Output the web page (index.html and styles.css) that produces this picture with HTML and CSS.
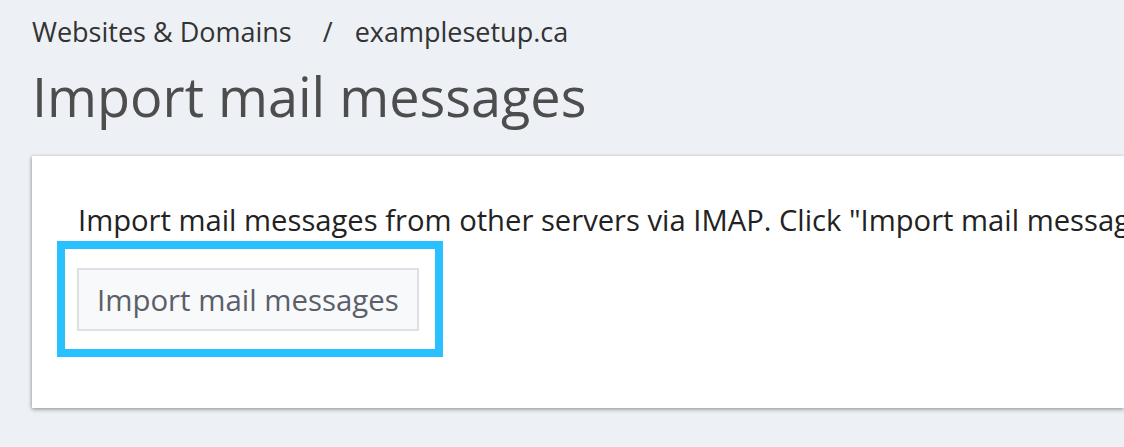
FILE: index.html
```html
<!DOCTYPE html>
<html lang="en">
<head>
<meta charset="utf-8">
<title>Import mail messages</title>
<link rel="stylesheet" href="styles.css">
</head>
<body>
<div class="page">
  <nav class="breadcrumbs">
    <a class="crumb">Websites &amp; Domains</a>
    <span class="sep">/</span>
    <a class="crumb">examplesetup.ca</a>
  </nav>
  <h1 class="title">Import mail messages</h1>
  <section class="card">
    <p class="hint">Import mail messages from other servers via IMAP. Click "Import mail messages" to start.</p>
    <div class="actions">
      <button class="btn" type="button">Import mail messages<span class="highlight"></span></button>
    </div>
  </section>
</div>
</body>
</html>
```

FILE: styles.css
```css
html, body {
  margin: 0;
  padding: 0;
  background: #edf0f5;
  overflow: hidden;
}

body {
  font-family: "Open Sans", "Noto Sans", sans-serif;
  width: 1124px;
  height: 447px;
}

.page {
  padding: 15px 0 0 32px;
}

.breadcrumbs {
  display: flex;
  align-items: baseline;
  font-size: 27px;
  line-height: 33px;
  color: #333;
  white-space: nowrap;
}

.crumb {
  color: #333;
}

.sep {
  margin: 0 22px 0 31px;
}

.title {
  margin: 12px 0 0 0;
  font-size: 54px;
  font-weight: 400;
  line-height: 72px;
  color: #4d4d4d;
  white-space: nowrap;
}

.card {
  margin-top: 24px;
  width: 1092px;
  height: 252px;
  background: #fff;
  box-shadow: 0 2px 4px rgba(0, 0, 0, 0.28), -1px 0 3px rgba(0, 0, 0, 0.15);
  padding: 44px 0 0 46px;
  box-sizing: border-box;
  overflow: hidden;
}

.hint {
  margin: 0;
  font-size: 29.2px;
  line-height: 40px;
  color: #222;
  white-space: nowrap;
}

.actions {
  margin-top: 28px;
  display: flex;
}

.btn {
  position: relative;
  font-family: inherit;
  font-size: 29.4px;
  color: #5b6068;
  background: #f8f9fb;
  border: 2px solid #dde0e5;
  padding: 0 18px;
  height: 63px;
  margin-left: -1px;
  cursor: pointer;
}

.highlight {
  position: absolute;
  top: -29px;
  left: -22px;
  right: -26px;
  bottom: -28px;
  border: 8px solid #29c0ff;
  pointer-events: none;
}
```
